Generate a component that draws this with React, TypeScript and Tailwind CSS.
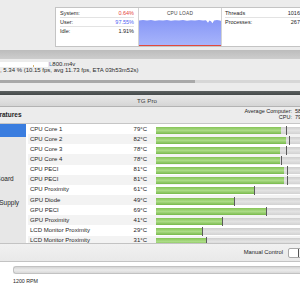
import React from 'react';

type Sensor = { name: string; temp: number; bar: number; tick: number };

const SENSORS: Sensor[] = [
  { name: 'CPU Core 1', temp: 79, bar: 125, tick: 130 },
  { name: 'CPU Core 2', temp: 82, bar: 130, tick: 133 },
  { name: 'CPU Core 3', temp: 78, bar: 124, tick: 130 },
  { name: 'CPU Core 4', temp: 78, bar: 124, tick: 125 },
  { name: 'CPU PECI', temp: 81, bar: 128, tick: 131 },
  { name: 'CPU PECI', temp: 81, bar: 128, tick: 131 },
  { name: 'CPU Proximity', temp: 61, bar: 98, tick: 98 },
  { name: 'GPU Diode', temp: 49, bar: 78, tick: 78 },
  { name: 'GPU PECI', temp: 69, bar: 110, tick: 110 },
  { name: 'GPU Proximity', temp: 41, bar: 66, tick: 66 },
  { name: 'LCD Monitor Proximity', temp: 29, bar: 46, tick: 46 },
  { name: 'LCD Monitor Proximity', temp: 31, bar: 50, tick: 50 },
];

const GROUPS = ['All', 'CPU', 'GPU', 'Drives', 'Logic Board', 'Battery', 'Power Supply'];

const CpuGraph: React.FC = () => (
  <svg width="83" height="27" viewBox="0 0 83 27" className="block">
    <defs>
      <linearGradient id="cpuFill" x1="0" y1="0" x2="0" y2="1">
        <stop offset="0" stopColor="#8797f6" />
        <stop offset="1" stopColor="#a7b4fb" />
      </linearGradient>
    </defs>
    <path
      d="M0 26 L0 1.4 L4 1.0 L8 1.6 L12 1.1 L16 1.8 L20 1.2 L24 1.5 L28 0.9 L32 1.7 L36 1.2 L40 1.6 L44 1.0 L48 1.8 L52 1.2 L56 1.5 L60 1.0 L64 1.6 L67 1.3 L69 3.8 L70.5 1.4 L72 2.2 L73.5 4.2 L75 1.5 L78 1.1 L81 1.4 L82 2 L82 26 Z"
      fill="url(#cpuFill)"
    />
    <rect x="0" y="26" width="83" height="1" fill="#e2493e" />
  </svg>
);

const StatRow: React.FC<{ label: string; value: string; color?: string; last?: boolean }> = ({ label, value, color, last }) => (
  <div className={`flex h-[9px] items-center justify-between ${last ? '' : 'border-b border-[#e3e3e3]'}`}>
    <span>{label}</span>
    <span className={color}>{value}</span>
  </div>
);

const SensorRow: React.FC<{ s: Sensor; i: number }> = ({ s, i }) => (
  <div className={`flex h-[10.15px] shrink-0 items-center ${i % 2 === 0 ? 'bg-white' : 'bg-[#f3f3f3]'}`}>
    <div className="w-[100px] truncate pl-[2px]">{s.name}</div>
    <div className="w-[21px] pr-[2px] text-right">{s.temp}°C</div>
    <div className="relative ml-[7px] mt-[2px] h-[7px] flex-1 bg-gradient-to-b from-[#cfcfcf] via-[#e3e3e3] to-[#d2d2d2]">
      <div
        className="h-full bg-gradient-to-b from-[#86c456] via-[#abdb86] to-[#78b94b]"
        style={{ width: s.bar }}
      />
      <div className="absolute top-[-1px] h-[9px] w-px bg-[#5b5b5b]" style={{ left: s.tick }} />
    </div>
  </div>
);

export default function App() {
  return (
    <div className="flex h-[300px] w-[300px] flex-col overflow-hidden bg-[#ececec] font-['Liberation_Sans',Arial,sans-serif] text-[#1e1e1e]">
      {/* Activity Monitor footer */}
      <div className="flex h-[50px] shrink-0 pl-[55px] pt-[7px] text-[5.5px]">
        <div className="flex h-[40px] w-[248px] shrink-0 border border-[#c4c4c4] bg-white">
          <div className="w-[82px] px-[4px] pt-[1px]">
            <StatRow label="System:" value="0.64%" color="text-[#e5443a]" />
            <StatRow label="User:" value="97.55%" color="text-[#4f64f3]" />
            <StatRow label="Idle:" value="1.91%" last />
          </div>
          <div className="flex w-[83px] flex-col border-l border-[#d2d2d2]">
            <div className="flex h-[11px] items-center justify-center text-[4.8px] tracking-[0.2px] text-[#444]">CPU LOAD</div>
            <CpuGraph />
          </div>
          <div className="w-[80px] border-l border-[#d2d2d2] pl-[3px] pr-[1px] pt-[1px]">
            <StatRow label="Threads" value="1016" />
            <StatRow label="Processes:" value="267" last />
          </div>
        </div>
      </div>
      <div className="h-[9px] shrink-0 bg-gradient-to-b from-[#bcbcbc] to-[#cdcdcd]" />

      {/* HandBrake status */}
      <div className="flex h-[32px] shrink-0 flex-col text-[6px] text-[#2a2a2a]">
        <div className="mt-[2px] flex h-[6px] items-center">
          <div className="relative h-[5px] w-[48px] bg-white">
            <div className="absolute left-[33px] top-[3px] h-[2px] w-[1px] bg-[#d8b56a]" />
          </div>
          <span className="ml-[1px]">
            <span className="text-[#4a78c8]">L</span>800.m4v
          </span>
        </div>
        <div className="flex h-[7px] items-center whitespace-nowrap">, 5.34 % (10.15 fps, avg 11.73 fps, ETA 03h53m52s)</div>
        <div className="mt-[6px] flex h-[3px]">
          <div className="w-[195px] bg-[#a9a9a9]" />
          <div className="flex-1 bg-[#d7d7d7]" />
        </div>
      </div>
      <div className="h-[4px] shrink-0 bg-gradient-to-b from-[#5d6262] to-[#454a4a]" />

      {/* TG Pro window */}
      <div className="flex h-[12px] shrink-0 items-center justify-center border-b border-[#b3b3b3] bg-gradient-to-b from-[#e9e9e9] to-[#d5d5d5] pr-[6px] text-[6.2px] text-[#3a3a3a]">
        TG Pro
      </div>
      <div className="flex h-[17px] shrink-0 items-center justify-between border-b border-[#c6c6c6]">
        <span className="-ml-[21px] whitespace-nowrap text-[6.5px] font-bold">Temperatures</span>
        <div className="-mr-[19px] grid grid-cols-[auto_24px] gap-x-[3px] pb-[2px] text-[5.5px] leading-[6px]">
          <span className="text-right">Average Computer:</span>
          <span>58°C</span>
          <span className="text-right">CPU:</span>
          <span>79°C</span>
        </div>
      </div>

      <div className="flex h-[119px] shrink-0 overflow-hidden">
        <div className="w-[28px] shrink-0 overflow-hidden border-r-2 border-white bg-[#e7e7e7] text-[6.5px]">
          {GROUPS.map((g, i) => (
            <div
              key={g}
              className={`flex items-center whitespace-nowrap ${i === 0 ? 'h-[13px] bg-[#3a7ddf] text-white' : 'h-[12px]'}`}
            >
              <span className="-ml-[21px]">{g}</span>
            </div>
          ))}
        </div>
        <div className="flex min-w-0 flex-1 flex-col overflow-hidden text-[6px]">
          {SENSORS.map((s, i) => (
            <SensorRow key={i} s={s} i={i} />
          ))}
        </div>
      </div>

      <div className="flex h-[19px] shrink-0 items-center justify-end border-y border-[#c3c3c3] bg-gradient-to-b from-[#f1f1f1] to-[#e9e9e9] text-[5.8px]">
        <span className="mr-[5px]">Manual Control</span>
        <div className="-mr-[6px] flex h-[10px] w-[18px] overflow-hidden rounded-[2px] border border-[#a8a8a8] bg-white">
          <div className="w-[9px]" />
          <div className="w-px bg-[#555]" />
          <div className="flex-1 bg-[#f4f4f4]" />
        </div>
      </div>

      <div className="flex flex-1 flex-col bg-white">
        <div className="ml-[13px] mt-[4px] h-[8px] rounded-l-[3px] border border-r-0 border-[#c2c2c2] bg-gradient-to-b from-[#d4d4d4] via-[#ececec] to-[#d9d9d9]" />
        <div className="ml-[13px] mt-[4px] text-[5.3px] leading-[6px]">1200 RPM</div>
      </div>
    </div>
  );
}
